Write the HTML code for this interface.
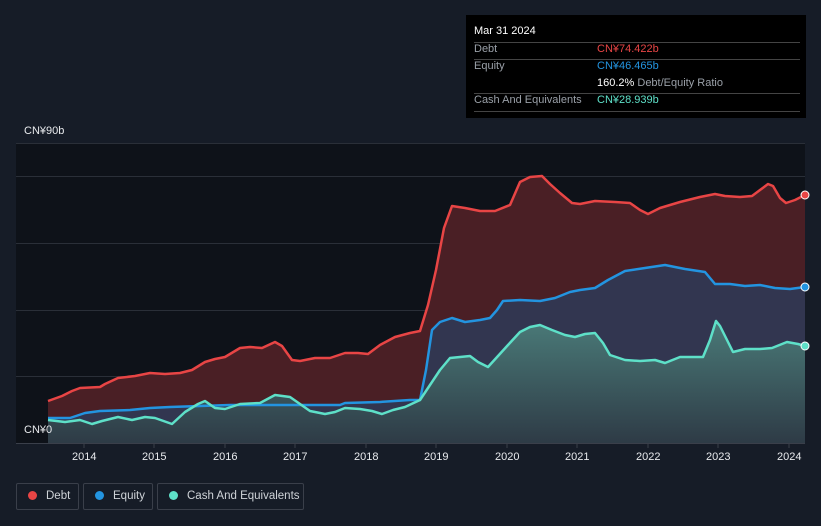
<!DOCTYPE html>
<html><head><meta charset="utf-8"><style>
body{margin:0;width:821px;height:526px;background:#161c27;font-family:"Liberation Sans",sans-serif;overflow:hidden;position:relative}
.tt{position:absolute;left:466px;top:15px;width:340px;height:103px;background:#000;color:#fff;font-size:11px}
.tt .r{position:absolute;left:8px;width:326px;border-top:1px solid #444}
.lab{color:#9aa0a8}
.leg{position:absolute;top:483px;height:27px;border:1px solid #3a3f4a;border-radius:2px;color:#cfd3d8;font-size:11.5px;line-height:25px;box-sizing:border-box;white-space:nowrap}
.leg i{display:inline-block;width:9px;height:9px;border-radius:50%;margin:0 9px 0 11px;vertical-align:-1px}
.ax{position:absolute;color:#e8eaed;font-size:11px}
</style></head><body>
<svg width="821" height="526" style="position:absolute;left:0;top:0">
<defs><linearGradient id="cg" x1="0" y1="0" x2="0" y2="1"><stop offset="0" stop-color="#4a7a78"/><stop offset="1" stop-color="#2e3b46"/></linearGradient></defs>
<rect x="16" y="143" width="789" height="300" fill="#0e1219"/>
<g stroke="#2a2f38" stroke-width="1"><line x1="16" y1="143.5" x2="805" y2="143.5"/><line x1="16" y1="176.5" x2="805" y2="176.5"/><line x1="16" y1="243.5" x2="805" y2="243.5"/><line x1="16" y1="310.5" x2="805" y2="310.5"/><line x1="16" y1="376.5" x2="805" y2="376.5"/></g>
<polygon fill="#4a1f25" points="48,401 62,396 72,391 80,388 100,387 105,384 118,378 135,376 150,373 165,374 180,373 192,370 205,362 215,359 225,357 240,348 250,347 262,348 275,342 282,346 292,360 300,361 315,358 330,358 345,353 358,353 368,354 380,345 395,337 410,333 420,331 428,305 436,270 444,228 452,206 465,208 480,211 495,211 510,205 520,182 530,177 542,176 550,184 560,193 572,203 580,204 595,201 615,202 630,203 640,210 648,214 660,208 680,202 700,197 715,194 725,196 740,197 752,196 760,190 768,184 773,186 780,198 786,203 795,200 805,195 805,443 48,443"/>
<polygon fill="#323650" points="48,418 70,418 85,413 100,411 130,410 150,408 170,407 200,406 230,405 260,405 290,405 320,405 340,405 345,403 380,402 410,400 420,400 426,370 432,330 440,322 452,318 465,322 480,320 490,318 497,310 503,301 520,300 540,301 555,298 570,292 580,290 595,288 608,280 625,271 645,268 665,265 685,269 705,272 715,284 730,284 745,286 760,285 775,288 790,289 805,287 805,443 48,443"/>
<polygon fill="url(#cg)" points="48,420 65,422 80,420 92,424 102,421 118,417 132,420 145,417 155,418 172,424 185,412 198,404 205,401 215,408 225,409 240,404 260,403 275,395 290,397 300,404 310,411 325,414 335,412 345,408 360,409 372,411 382,414 393,410 405,407 420,400 430,385 440,370 450,358 470,356 478,362 488,367 498,356 508,345 520,332 530,327 540,325 552,330 565,335 575,337 585,334 595,333 603,343 610,355 625,360 640,361 655,360 665,363 680,357 695,357 703,357 710,340 716,321 720,326 727,340 733,352 745,349 760,349 772,348 787,342 798,344 805,346 805,443 48,443"/>
<g fill="none" stroke-width="2.5" stroke-linejoin="round">
<polyline stroke="#e84545" points="48,401 62,396 72,391 80,388 100,387 105,384 118,378 135,376 150,373 165,374 180,373 192,370 205,362 215,359 225,357 240,348 250,347 262,348 275,342 282,346 292,360 300,361 315,358 330,358 345,353 358,353 368,354 380,345 395,337 410,333 420,331 428,305 436,270 444,228 452,206 465,208 480,211 495,211 510,205 520,182 530,177 542,176 550,184 560,193 572,203 580,204 595,201 615,202 630,203 640,210 648,214 660,208 680,202 700,197 715,194 725,196 740,197 752,196 760,190 768,184 773,186 780,198 786,203 795,200 805,195"/>
<polyline stroke="#2394e0" points="48,418 70,418 85,413 100,411 130,410 150,408 170,407 200,406 230,405 260,405 290,405 320,405 340,405 345,403 380,402 410,400 420,400 426,370 432,330 440,322 452,318 465,322 480,320 490,318 497,310 503,301 520,300 540,301 555,298 570,292 580,290 595,288 608,280 625,271 645,268 665,265 685,269 705,272 715,284 730,284 745,286 760,285 775,288 790,289 805,287"/>
<polyline stroke="#5ee0c8" points="48,420 65,422 80,420 92,424 102,421 118,417 132,420 145,417 155,418 172,424 185,412 198,404 205,401 215,408 225,409 240,404 260,403 275,395 290,397 300,404 310,411 325,414 335,412 345,408 360,409 372,411 382,414 393,410 405,407 420,400 430,385 440,370 450,358 470,356 478,362 488,367 498,356 508,345 520,332 530,327 540,325 552,330 565,335 575,337 585,334 595,333 603,343 610,355 625,360 640,361 655,360 665,363 680,357 695,357 703,357 710,340 716,321 720,326 727,340 733,352 745,349 760,349 772,348 787,342 798,344 805,346"/>
</g>
<circle cx="805" cy="195" r="4" fill="#e84545" stroke="#fff" stroke-width="1"/>
<circle cx="805" cy="287" r="4" fill="#2394e0" stroke="#fff" stroke-width="1"/>
<circle cx="805" cy="346" r="4" fill="#5ee0c8" stroke="#fff" stroke-width="1"/>
<line x1="16" y1="443.5" x2="805" y2="443.5" stroke="#3a3f4a"/>
<g stroke="#3a3f4a"><line x1="84" y1="444" x2="84" y2="448"/><line x1="154" y1="444" x2="154" y2="448"/><line x1="225" y1="444" x2="225" y2="448"/><line x1="295" y1="444" x2="295" y2="448"/><line x1="366" y1="444" x2="366" y2="448"/><line x1="436" y1="444" x2="436" y2="448"/><line x1="507" y1="444" x2="507" y2="448"/><line x1="577" y1="444" x2="577" y2="448"/><line x1="648" y1="444" x2="648" y2="448"/><line x1="718" y1="444" x2="718" y2="448"/><line x1="789" y1="444" x2="789" y2="448"/></g>
</svg>
<div class="ax" style="left:24px;top:125px">CN¥90b</div>
<div class="ax" style="left:24px;top:424px">CN¥0</div>
<div class="ax" style="left:72px;top:451px">2014</div><div class="ax" style="left:142px;top:451px">2015</div><div class="ax" style="left:213px;top:451px">2016</div><div class="ax" style="left:283px;top:451px">2017</div><div class="ax" style="left:354px;top:451px">2018</div><div class="ax" style="left:424px;top:451px">2019</div><div class="ax" style="left:495px;top:451px">2020</div><div class="ax" style="left:565px;top:451px">2021</div><div class="ax" style="left:636px;top:451px">2022</div><div class="ax" style="left:706px;top:451px">2023</div><div class="ax" style="left:777px;top:451px">2024</div>
<div class="tt">
<div style="position:absolute;left:8px;top:10px">Mar 31 2024</div>
<div class="r" style="top:27px"></div>
<div class="lab" style="position:absolute;left:8px;top:28px">Debt</div><div style="position:absolute;left:131px;top:28px;color:#e84545">CN¥74.422b</div>
<div class="r" style="top:44px"></div>
<div class="lab" style="position:absolute;left:8px;top:45px">Equity</div><div style="position:absolute;left:131px;top:45px;color:#2394e0">CN¥46.465b</div>
<div style="position:absolute;left:131px;top:62px">160.2% <span class="lab">Debt/Equity Ratio</span></div>
<div class="r" style="top:78px"></div>
<div class="lab" style="position:absolute;left:8px;top:79px">Cash And Equivalents</div><div style="position:absolute;left:131px;top:79px;color:#5ee0c8">CN¥28.939b</div>
<div class="r" style="top:96px"></div>
</div>
<div class="leg" style="left:16px;width:63px"><i style="background:#e84545"></i>Debt</div>
<div class="leg" style="left:83px;width:70px"><i style="background:#2394e0"></i>Equity</div>
<div class="leg" style="left:157px;width:147px"><i style="background:#5ee0c8"></i>Cash And Equivalents</div>
</body></html>
